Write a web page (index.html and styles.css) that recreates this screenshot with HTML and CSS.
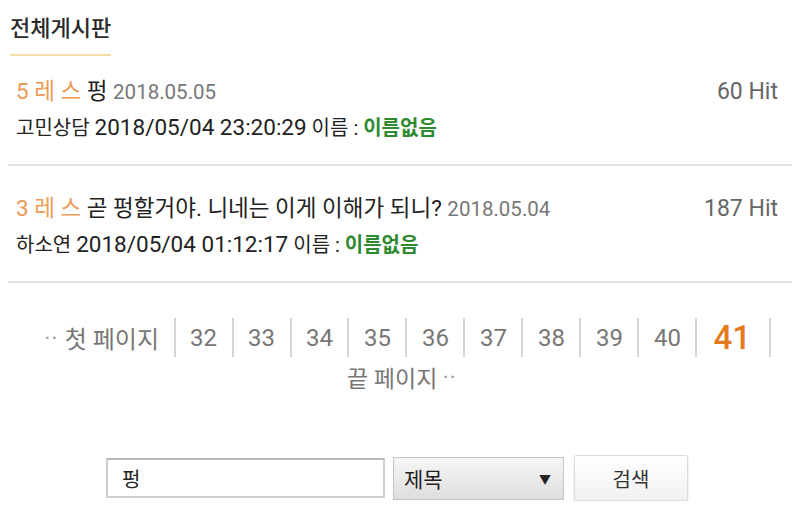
FILE: index.html
```html
<!DOCTYPE html>
<html lang="ko">
<head>
	<meta charset="UTF-8">
	<title>전체게시판</title>
	<link rel="stylesheet" href="styles.css">
</head>
<body>
	<div class="board-head">
		<h2 class="board-title">전체게시판</h2>
	</div>
	<ul class="post-list">
		<li class="post">
			<div class="post-top">
				<p class="post-title"><span class="reply">5 레 스</span> 펑 <span class="date">2018.05.05</span></p>
				<span class="hit">60 Hit</span>
			</div>
			<p class="post-info">고민상담 <span class="time">2018/05/04 23:20:29</span> 이름 : <span class="author">이름없음</span></p>
		</li>
		<li class="post">
			<div class="post-top">
				<p class="post-title"><span class="reply">3 레 스</span> 곧 펑할거야. 니네는 이게 이해가 되니? <span class="date">2018.05.04</span></p>
				<span class="hit">187 Hit</span>
			</div>
			<p class="post-info">하소연 <span class="time">2018/05/04 01:12:17</span> 이름 : <span class="author">이름없음</span></p>
		</li>
	</ul>
	<div class="paging">
		<a class="page first"><span class="dots">··</span>첫 페이지</a>
		<a class="page">32</a>
		<a class="page">33</a>
		<a class="page">34</a>
		<a class="page">35</a>
		<a class="page">36</a>
		<a class="page">37</a>
		<a class="page">38</a>
		<a class="page">39</a>
		<a class="page">40</a>
		<a class="page current">41</a>
		<a class="page last">끝 페이지<span class="dots">··</span></a>
	</div>
	<form class="search">
		<input class="search-input" type="text" value="펑">
		<div class="search-select">
			<span>제목</span>
			<span class="arrow">▼</span>
		</div>
		<button class="search-btn" type="button">검색</button>
	</form>
</body>
</html>
```

FILE: styles.css
```css
body{
	margin: 0;
	font-family: Roboto, "Noto Sans CJK KR", sans-serif;
	color: #222;
	background: #fff;
}
p{margin: 0;}
ul,li{list-style: none;margin: 0;padding: 0;}

.board-head{padding: 15px 10px 0;}
.board-title{
	display: inline-block;
	margin: 0;
	font-size: 22px;
	font-weight: 500;
	line-height: 28px;
	color: #2a2a2a;
	padding-bottom: 11px;
	border-bottom: 2px solid #f4dfa6;
}

.post-list{margin: 0 8px;}
.post{
	padding: 27px 14px 21px 8px;
	border-bottom: 2px solid #e2e2e2;
}
.post:first-child{padding-top: 20px;}
.post-top{
	display: flex;
	justify-content: space-between;
	align-items: baseline;
	height: 30px;
	line-height: 30px;
	font-size: 22.5px;
}
.reply{color: #ec9a55;}
.date{color: #777;font-size: 20.5px;}
.hit{color: #666;font-size: 23px;}
.post-info{
	height: 30px;
	margin-top: 7px;
	line-height: 30px;
	font-size: 20px;
	color: #222;
}
.time{font-size: 22.5px;line-height: 20px;}
.author{color: #2f8a2f;font-weight: bold;}

.paging{
	display: flex;
	flex-wrap: wrap;
	justify-content: center;
	margin: 35px 0 0;
	padding: 0 10px 0 20px;
}
.page{
	display: flex;
	align-items: center;
	height: 39px;
	padding: 0 14.5px;
	font-size: 24px;
	color: #777;
	border-right: 2px solid #d4d4d4;
}
.page.first{padding-left: 0;}
.page.current{
	padding: 0 18px 0 16px;
	font-size: 33px;
	font-weight: 500;
	color: #e47a1e;
}
.page.last{border-right: 0;font-size: 23px;}
.dots{
	font-size: 16px;
	font-weight: bold;
	color: #999;
	letter-spacing: 2px;
	margin: 0 6px;
}

.search{
	display: flex;
	justify-content: center;
	align-items: center;
	margin-top: 59px;
	padding-right: 6px;
}
.search-input{
	box-sizing: border-box;
	width: 279px;
	height: 40px;
	margin: 0 8px 0 0;
	padding: 0 14px;
	border: 2px solid #cfcfcf;
	border-top-color: #b9b9b9;
	font-family: inherit;
	font-size: 20px;
	color: #222;
	outline: none;
}
.search-select{
	box-sizing: border-box;
	display: flex;
	justify-content: space-between;
	align-items: center;
	width: 171px;
	height: 43px;
	margin-right: 10px;
	padding: 0 12px 0 10px;
	border: 1px solid #c4c4c4;
	background: linear-gradient(#f6f6f6, #dedede);
	font-size: 21px;
	color: #222;
}
.arrow{font-size: 12px;}
.search-btn{
	box-sizing: border-box;
	width: 114px;
	height: 46px;
	border: 1px solid #dcdcdc;
	border-radius: 2px;
	background: linear-gradient(#fff, #f1f1f1);
	box-shadow: 0 2px 2px rgba(0,0,0,0.18);
	font-family: inherit;
	font-size: 20px;
	color: #333;
}
```
